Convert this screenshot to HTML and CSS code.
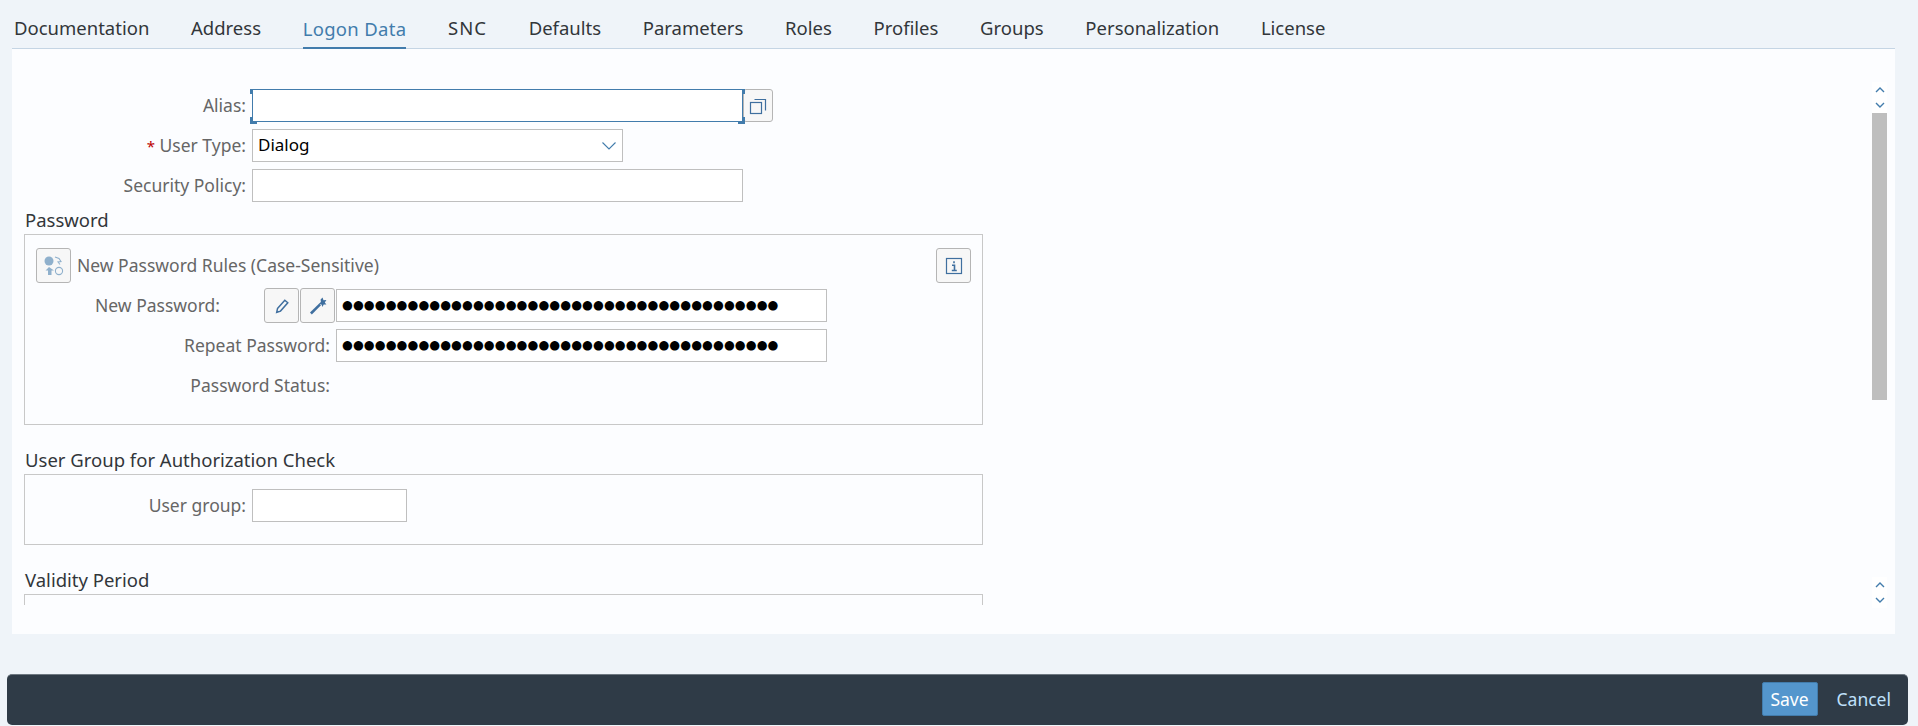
FILE: index.html
```html
<!DOCTYPE html>
<html lang="en">
	<head>
		<title>Logon Data</title>
		<link rel="stylesheet" href="styles.css">
	</head>

	<body>
		<ul class="tabs">
			<li>Documentation</li>
			<li>Address</li>
			<li class="active">Logon Data</li>
			<li class="caps">SNC</li>
			<li>Defaults</li>
			<li>Parameters</li>
			<li>Roles</li>
			<li>Profiles</li>
			<li>Groups</li>
			<li>Personalization</li>
			<li>License</li>
		</ul>

		<div class="panel">
			<div class="form">
				<div class="row">
					<label class="label">Alias:</label>
					<div class="focus-wrap">
						<div class="field wide focused"></div>
						<i class="corner tl"></i><i class="corner tr"></i><i class="corner bl"></i><i class="corner br"></i>
					</div>
					<button class="icon-btn copy-btn">
						<svg width="20" height="20" viewBox="0 0 20 20" fill="none" stroke="#3f6f9f" stroke-width="1.2">
							<rect x="2.5" y="6.5" width="11" height="11"/>
							<path d="M6.5 3.5h11v11"/>
						</svg>
					</button>
				</div>
				<div class="row">
					<label class="label"><span class="req">*</span> User Type:</label>
					<div class="field select">
						<span>Dialog</span>
						<svg width="16" height="10" viewBox="0 0 16 10" fill="none" stroke="#427cac" stroke-width="1.1"><path d="M1.5 1.5L8 8l6.5-6.5"/></svg>
					</div>
				</div>
				<div class="row">
					<label class="label">Security Policy:</label>
					<div class="field wide"></div>
				</div>

				<h3 class="group-title first">Password</h3>
				<div class="group pw-group">
					<div class="rules-row">
						<button class="icon-btn">
							<svg width="26" height="26" viewBox="0 0 26 26" fill="none" stroke="#8fb0cc" stroke-width="1.1">
								<circle cx="8" cy="8" r="4.5" fill="#8fb0cc" stroke="none"/>
								<path d="M8 14l-3.5 3.5H7V22h3.5v-4.5H13z" fill="#8fb0cc" stroke="none"/>
								<circle cx="18" cy="18" r="3.6"/>
								<path d="M14 4l4 1.5 2 3-3 .5 2 2.5"/>
							</svg>
						</button>
						<span class="rules-text">New Password Rules (Case-Sensitive)</span>
						<button class="icon-btn info-btn">
							<svg width="18" height="18" viewBox="0 0 18 18" fill="none" stroke="#3f6f9f" stroke-width="1.2">
								<rect x="1.5" y="1.5" width="15" height="15"/>
								<path d="M9 4.2v2M7 8.2h2.5v5M6.8 13.5h5" stroke-width="1.6"/>
							</svg>
						</button>
					</div>
					<div class="row pw-row">
						<label class="label short">New Password:</label>
						<button class="icon-btn">
							<svg width="16" height="16" viewBox="0 0 16 16" fill="none" stroke="#3f6f9f" stroke-width="1.5">
								<path d="M3.5 10.5L10.8 2.2l3 2.6-7.3 8.3-3.8 1.2z"/>
							</svg>
						</button>
						<button class="icon-btn">
							<svg width="20" height="20" viewBox="0 0 20 20" fill="#3f6f9f">
								<path d="M2 16.6L11.2 7.4l1.8 1.8-9.2 9.2z"/>
								<path d="M14.5 1.5l1 2.7 2.9-.2-1.6 2.4 1.6 2-2.7.1-1.2 2.4-1-2.5-2.6-.6 2-1.8-.3-2.6z"/>
							</svg>
						</button>
						<div class="field pw">●●●●●●●●●●●●●●●●●●●●●●●●●●●●●●●●●●●●●●●●</div>
					</div>
					<div class="row pw-row">
						<label class="label pw-label">Repeat Password:</label>
						<div class="field pw">●●●●●●●●●●●●●●●●●●●●●●●●●●●●●●●●●●●●●●●●</div>
					</div>
					<div class="row pw-row">
						<label class="label pw-label">Password Status:</label>
					</div>
				</div>

				<h3 class="group-title">User Group for Authorization Check</h3>
				<div class="group ug-group">
					<div class="row">
						<label class="label inner">User group:</label>
						<div class="field small"></div>
					</div>
				</div>

				<h3 class="group-title">Validity Period</h3>
				<div class="group"></div>
			</div>

			<div class="scrollbar">
				<div class="arrows">
					<svg width="10" height="6" viewBox="0 0 10 6" fill="none" stroke="#427cac" stroke-width="1.4"><path d="M1 5l4-4 4 4"/></svg>
					<svg width="10" height="6" viewBox="0 0 10 6" fill="none" stroke="#427cac" stroke-width="1.4"><path d="M1 1l4 4 4-4"/></svg>
				</div>
				<div class="track"><div class="thumb"></div></div>
				<div class="arrows">
					<svg width="10" height="6" viewBox="0 0 10 6" fill="none" stroke="#427cac" stroke-width="1.4"><path d="M1 5l4-4 4 4"/></svg>
					<svg width="10" height="6" viewBox="0 0 10 6" fill="none" stroke="#427cac" stroke-width="1.4"><path d="M1 1l4 4 4-4"/></svg>
				</div>
			</div>
		</div>

		<div class="footer">
			<button class="save">Save</button>
			<button class="cancel">Cancel</button>
		</div>
	</body>
</html>
```
FILE: styles.css
```css
/* general styling */
* {
	box-sizing: border-box;
	margin: 0;
	padding: 0;
}

html, body {
	height: 100%;
}

body {
	background-color: #eff4f9;
	color: #32363a;
	display: flex;
	flex-direction: column;
	font-family: "Noto Sans", "Open Sans", sans-serif;
	font-size: 17.5px;
	overflow: hidden;
}

/* tabs */
.tabs {
	border-bottom: 1px solid #c5d5e4;
	display: flex;
	gap: 41.7px;
	height: 49px;
	list-style-type: none;
	margin: 0 23px 0 12px;
	padding: 0 0 0 2px;
}

.tabs li {
	color: #32363a;
	font-size: 18.5px;
	line-height: 56px;
	white-space: nowrap;
}

.tabs li.caps {
	letter-spacing: 1px;
}

.tabs li.active {
	border-bottom: 2px solid #427cac;
	color: #427cac;
	height: 49px;
	letter-spacing: .3px;
	line-height: 58px;
}

/* main panel */
.panel {
	background-color: #fcfdff;
	display: flex;
	height: 585px;
	justify-content: space-between;
	margin: 0 23px 0 12px;
	padding: 33px 8px 26px 12px;
}

.form {
	height: 516px;
	margin-top: 7px;
	overflow: hidden;
	width: 959px;
}

.row {
	align-items: center;
	display: flex;
	height: 33px;
	margin-bottom: 7px;
}

.label {
	color: #666666;
	flex-shrink: 0;
	margin-right: 6px;
	padding-bottom: 2px;
	text-align: right;
	white-space: nowrap;
	width: 222px;
}

.label.inner {
	width: 221px;
}

.label.short {
	margin-right: 44px;
	width: 195px;
}

.label.pw-label {
	margin-right: 6px;
	width: 305px;
}

.req {
	color: #bb0000;
	font-size: 15px;
}

.field {
	background-color: #ffffff;
	border: 1px solid #bfbfbf;
	color: #000000;
	font-size: 17px;
	height: 33px;
	line-height: 30px;
	padding: 0 5px;
}

.wide {
	width: 491px;
}

.small {
	width: 155px;
}

.select {
	align-items: center;
	display: flex;
	justify-content: space-between;
	width: 371px;
}

.select span {
	padding-bottom: 2px;
}

.focus-wrap {
	position: relative;
}

.focused {
	border-color: #427cac;
}

.corner {
	border: 0 solid #427cac;
	height: 7px;
	position: absolute;
	width: 7px;
}

.tl { border-left-width: 2px; border-top-width: 2px; left: -2px; top: -2px; }
.tr { border-right-width: 2px; border-top-width: 2px; right: -2px; top: -2px; }
.bl { border-bottom-width: 2px; border-left-width: 2px; bottom: -2px; left: -2px; }
.br { border-bottom-width: 2px; border-right-width: 2px; bottom: -2px; right: -2px; }

.icon-btn {
	align-items: center;
	background-color: #f7f7f7;
	border: 1px solid #b5b5b5;
	border-radius: 3px;
	display: flex;
	flex-shrink: 0;
	height: 35px;
	justify-content: center;
	margin-right: 1px;
	width: 35px;
}

.copy-btn {
	height: 33px;
	width: 30px;
}

/* groups */
.group-title {
	color: #32363a;
	font-size: 18.5px;
	font-weight: normal;
	line-height: 24px;
	margin-bottom: 2px;
	margin-top: 23px;
	padding-left: 1px;
}

.group-title.first {
	margin-top: -1px;
}

.group {
	border: 1px solid #c8c8c8;
	height: 71px;
	width: 959px;
}

.pw-group {
	height: 191px;
	padding: 13px 11px 0;
}

.ug-group {
	padding: 14px 0 0;
}

.rules-row {
	align-items: center;
	display: flex;
	height: 35px;
	margin-bottom: 6px;
}

.rules-row .icon-btn {
	margin-right: 6px;
}

.rules-text {
	color: #666666;
	padding-bottom: 2px;
}

.rules-row .info-btn {
	margin-left: auto;
	margin-right: 0;
}

.pw-row {
	margin-left: -11px;
}

.pw {
	font-family: "DejaVu Sans", sans-serif;
	font-size: 12.4px;
	letter-spacing: .1px;
	line-height: 30px;
	overflow: hidden;
	white-space: nowrap;
	width: 491px;
}

/* scrollbar */
.scrollbar {
	display: flex;
	flex-direction: column;
	width: 15px;
}

.arrows {
	align-items: center;
	background-color: #ffffff;
	display: flex;
	flex-direction: column;
	gap: 9px;
	height: 31px;
	justify-content: center;
}

.track {
	flex: 1;
}

.thumb {
	background-color: #bebebe;
	height: 287px;
}

/* footer */
.footer {
	align-items: center;
	background-color: #2f3b47;
	border-radius: 5px;
	border-top: 1px solid #6e7881;
	display: flex;
	height: 51px;
	justify-content: flex-end;
	margin: 40px 10px 0 7px;
	padding: 0 17px 2px 0;
}

.footer button {
	background: none;
	border: 0;
	font-family: inherit;
	font-size: 17.5px;
}

.save {
	background-color: #5496cd !important;
	border: 1px solid #427cac !important;
	border-radius: 2px;
	color: #ffffff;
	height: 34px;
	margin-right: 19px;
	width: 56px;
}

.cancel {
	color: #bfe0fb;
}
```
